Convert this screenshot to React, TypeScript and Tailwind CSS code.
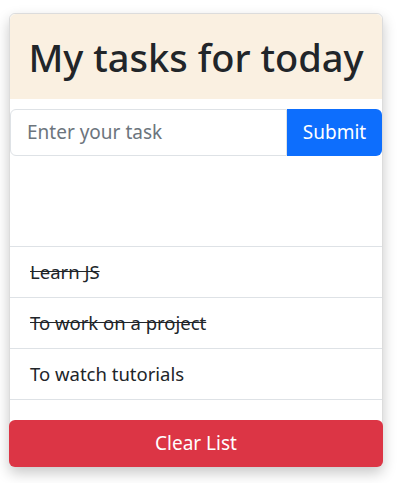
import React from 'react';

const tasks = [
  { text: 'Learn JS', done: true },
  { text: 'To work on a project', done: true },
  { text: 'To watch tutorials', done: false },
];

export default function App() {
  return (
    <div className="min-h-[483px] bg-white pt-[13px] pl-[9px]" style={{ fontFamily: '"Noto Sans", "Open Sans", sans-serif' }}>
      <div className="w-[374px] rounded-[6px] border border-[#dcdcdc] bg-white shadow-[0_6px_14px_rgba(0,0,0,0.22)]">
        {/* Header */}
        <div className="flex h-[85px] items-center justify-center rounded-t-[6px] bg-[#faf0e1]">
          <h1 className="text-[38px] font-medium leading-none text-[#212529]">My tasks for today</h1>
        </div>

        {/* Input */}
        <div className="mt-[10px] flex h-[47px]">
          <input
            className="min-w-0 flex-1 rounded-l-[6px] border border-[#dee2e6] px-4 text-[19px] text-[#212529] placeholder:text-[#6c757d] outline-none"
            placeholder="Enter your task"
          />
          <button className="w-[95px] rounded-r-[6px] bg-[#0d6efd] text-[19px] text-white">Submit</button>
        </div>

        <div className="h-[90px]" />

        {/* List */}
        <ul className="border-t border-[#dee2e6]">
          {tasks.map((t) => (
            <li
              key={t.text}
              className={`flex h-[51px] items-center border-b border-[#dee2e6] px-5 text-[18.5px] text-[#212529] ${t.done ? 'line-through' : ''}`}
            >
              {t.text}
            </li>
          ))}
        </ul>

        <div className="h-[20px]" />
        <button className="-mx-px -mb-px block h-[47px] w-[374px] rounded-[6px] bg-[#dc3545] text-[19px] text-white">
          Clear List
        </button>
      </div>
    </div>
  );
}
